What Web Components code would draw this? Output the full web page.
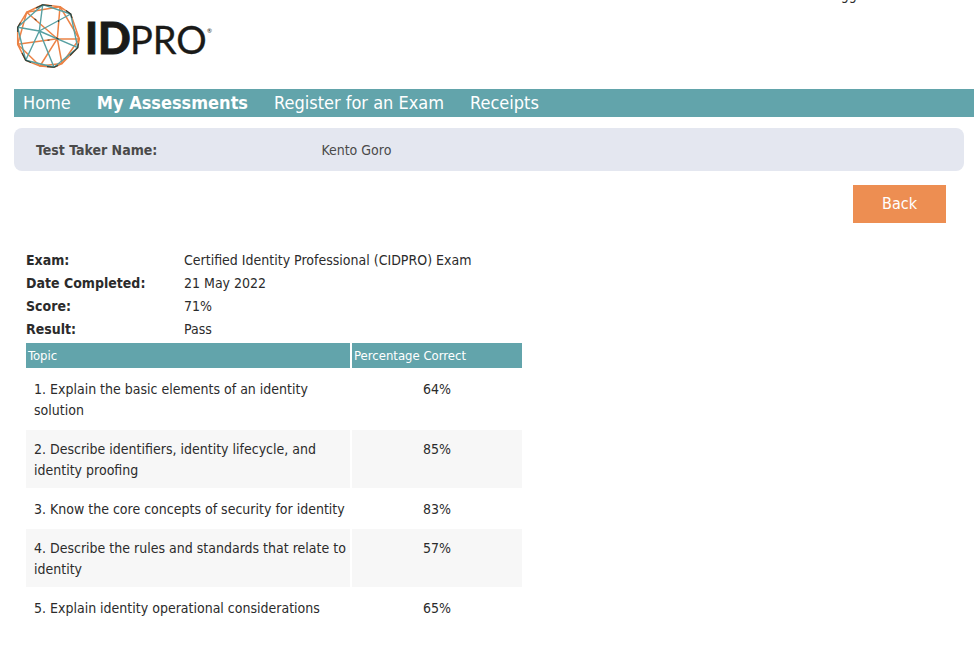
<!DOCTYPE html>
<html lang="en">
<head>
<meta charset="utf-8">
<title>IDPro – My Assessments</title>
<style>
body { margin: 0; background: #fff; color: #2b2b2b; font: 14px/21px "DejaVu Sans Condensed", "DejaVu Sans", sans-serif; }
</style>
</head>
<body>
<assessment-page>
  <site-header slot="header"></site-header>
  <site-nav slot="nav"></site-nav>
  <taker-panel name="Kento Goro"></taker-panel>
  <back-action>Back</back-action>
  <exam-details></exam-details>
  <topic-table></topic-table>
</assessment-page>

<script>
class BaseElement extends HTMLElement {
  connectedCallback() {
    if (!this.shadowRoot) this.attachShadow({ mode: 'open' }).innerHTML = this.render();
  }
}

customElements.define('assessment-page', class extends BaseElement {
  render() {
    return `<style>
      :host { display: block; padding: 0 5px 0 14px; }
      main { display: flex; flex-direction: column; padding: 11px 10px 24px 0; }
    </style>
    <slot name="header"></slot>
    <slot name="nav"></slot>
    <main><slot></slot></main>`;
  }
});

customElements.define('site-header', class extends BaseElement {
  render() {
    return `<style>
      :host { display: flex; justify-content: space-between; align-items: flex-start; height: 89px; overflow: hidden; }
      svg { display: block; }
      text { fill: #1a1a18; stroke: #1a1a18; stroke-width: 0.3; font-family: Lato, sans-serif; }
      .heavy { stroke-width: 0.9; }
      .mark { stroke: none; }
      .teal, .orange, .dark { fill: none; stroke-linejoin: round; }
      .teal { stroke: #57a0a2; stroke-width: 1.4; }
      .orange { stroke: #ec8245; stroke-width: 1.5; }
      .dark { stroke: #2f3d38; stroke-width: 1.1; }
      .user { margin: -15px 86px 0 0; line-height: 20px; }
    </style>
    <svg width="202" height="76" viewBox="14 0 202 76" role="img" aria-label="IDPRO">
      <path class="orange" d="M60 6.7 79.3 39 62 63.5 40 66 17.7 44.3 26.7 12.3ZM57.3 38.7 60 6.7M57.3 38.7 79.3 39M57.3 38.7 62 63.5M57.3 38.7 40 66M57.3 38.7 17.7 44.3M57.3 38.7 26.7 12.3"/>
      <path class="orange" d="M42.7 4.7 60 6.7 70.7 14 79.3 39 77.7 47.7 62 63.5 54 67.3 40 66 25.7 60.3 17.7 44.3 17.7 27.3 26.7 12.3Z"/>
      <path class="teal" d="M42.7 4.7 70.7 14 77.7 47.7 54 67.3 25.7 60.3 17.7 27.3ZM39.3 31 42.7 4.7M39.3 31 70.7 14M39.3 31 77.7 47.7M39.3 31 54 67.3M39.3 31 25.7 60.3M39.3 31 17.7 27.3"/>
      <path class="dark" d="M36 7.9 42.7 4.7 52 5.8M66 10.5 70.7 14 72 18M78.5 43.5 77.7 47.7 70 55.5M58 65.4 54 67.3 47 66.6M31 62.4 25.7 60.3 22 53M17.7 32 17.7 27.3 20.5 22.5M56 37.6 58.6 39.2M34.5 18.7 36.5 20.4M58.2 20.2 58.8 22M47.5 40.3 49.5 40"/>
      <text class="heavy" x="85" y="54" font-size="43" font-weight="900">ID</text>
      <text x="130" y="54" font-size="38">PRO</text>
      <text class="mark" x="207" y="33" font-size="6">®</text>
    </svg>
    <div class="user">Logged in</div>`;
  }
});

customElements.define('site-nav', class extends BaseElement {
  render() {
    return `<style>
      :host { display: block; background: #62a4ab; }
      nav { display: flex; gap: 26px; padding: 0 9px; font-size: 18px; line-height: 28px; }
      a { color: #fff; text-decoration: none; white-space: nowrap; }
      a[aria-current] { font-weight: 700; }
    </style>
    <nav aria-label="Main">
      <a href="#home">Home</a>
      <a href="#assessments" aria-current="page">My Assessments</a>
      <a href="#register">Register for an Exam</a>
      <a href="#receipts">Receipts</a>
    </nav>`;
  }
});

customElements.define('taker-panel', class extends BaseElement {
  render() {
    return `<style>
      :host { display: block; background: #e4e7f0; border-radius: 8px; color: #4a4a4a; }
      dl { display: grid; grid-template-columns: 3fr 7fr; margin: 0; padding: 12px 0 10px 22px; }
      dt { font-weight: 700; }
      dd { margin: 0; padding-left: 7px; }
    </style>
    <dl><dt>Test Taker Name:</dt><dd>${this.getAttribute('name')}</dd></dl>`;
  }
});

customElements.define('back-action', class extends BaseElement {
  render() {
    return `<style>
      :host { display: flex; justify-content: flex-end; padding: 14px 18px 0 0; }
      button { border: 0; padding: 0 29px; background: #ed8e52; color: #fff; font: inherit; font-size: 16px; line-height: 38px; cursor: pointer; }
    </style>
    <button type="button"><slot></slot></button>`;
  }
});

customElements.define('exam-details', class extends BaseElement {
  render() {
    return `<style>
      :host { display: block; padding: 26px 0 0 12px; line-height: 23px; }
      dl { display: grid; grid-template-columns: 158px 1fr; margin: 0; }
      dt { font-weight: 700; }
      dd { margin: 0; }
    </style>
    <dl>
      <dt>Exam:</dt><dd>Certified Identity Professional (CIDPRO) Exam</dd>
      <dt>Date Completed:</dt><dd>21 May 2022</dd>
      <dt>Score:</dt><dd>71%</dd>
      <dt>Result:</dt><dd>Pass</dd>
    </dl>`;
  }
});

customElements.define('topic-table', class extends BaseElement {
  render() {
    const rows = [
      ['1. Explain the basic elements of an identity solution', '64%'],
      ['2. Describe identifiers, identity lifecycle, and identity proofing', '85%'],
      ['3. Know the core concepts of security for identity', '83%'],
      ['4. Describe the rules and standards that relate to identity', '57%'],
      ['5. Explain identity operational considerations', '65%']
    ];
    return `<style>
      :host { display: block; padding-left: 10px; }
      table { table-layout: fixed; width: 500px; max-width: 100%; border-spacing: 2px; }
      .score { width: 166px; }
      th { padding: 2px; background: #62a4ab; color: #fff; font-size: 13px; font-weight: 400; text-align: left; }
      td { padding: 9px 0 7px 8px; vertical-align: top; }
      td + td { padding-left: 0; text-align: center; }
      tbody tr:nth-child(even) td { background: #f7f7f7; }
    </style>
    <table>
      <thead><tr><th scope="col">Topic</th><th scope="col" class="score">Percentage Correct</th></tr></thead>
      <tbody>${rows.map(([topic, score]) => `<tr><td>${topic}</td><td>${score}</td></tr>`).join('')}</tbody>
    </table>`;
  }
});
</script>
</body>
</html>
